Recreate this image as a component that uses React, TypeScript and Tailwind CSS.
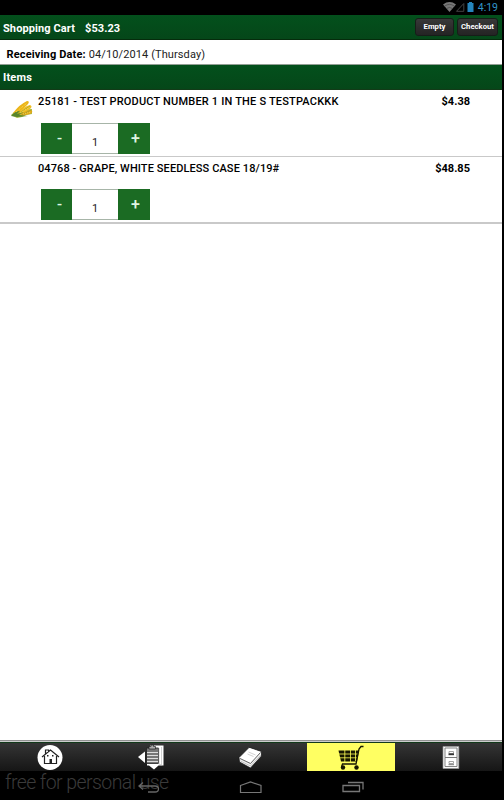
import React from 'react';

interface CartItem {
  code: string;
  name: string;
  price: string;
  quantity: number;
  corn?: boolean;
}

const items: CartItem[] = [
  { code: '25181', name: 'TEST PRODUCT NUMBER 1 IN THE S TESTPACKKK', price: '$4.38', quantity: 1, corn: true },
  { code: '04768', name: 'GRAPE, WHITE SEEDLESS CASE 18/19#', price: '$48.85', quantity: 1 },
];

const StatusBar: React.FC = () => (
  <div className="flex h-[15px] shrink-0 items-center justify-end pr-[6px]">
    <svg className="h-[15px] w-[32px]" viewBox="0 0 32 15">
      <path d="M0 4.5Q6.5-.3 13 4.5L6.5 12Z" fill="#777" />
      <path d="M1.5 6.2Q6.5 2.5 11.5 6.2M3.6 8.5Q6.5 6.4 9.4 8.5" fill="none" stroke="#444" strokeWidth=".7" />
      <path d="M13.5 11.3H20.8V3.5Z" fill="none" stroke="#444" strokeWidth="1" />
      <path d="M24.5 3H26V2h3v1h1.5v9h-6Z" fill="#2585bd" />
    </svg>
    <span className="ml-[3px] text-[10.5px] leading-[15px] text-[#3295c9]">4:19</span>
  </div>
);

const HeaderButton: React.FC<{ label: string; className: string }> = ({ label, className }) => (
  <button
    className={`h-[18px] rounded-[3px] border border-[#171d19] bg-linear-to-b from-[#383838] to-[#242424] text-[7.7px] leading-[16px] font-bold text-white ${className}`}
  >
    {label}
  </button>
);

const CornIcon: React.FC = () => (
  <svg className="h-[20px] w-[24px]" viewBox="0 0 24 20">
    <path d="M1 16Q3 13 8 11L22 10 22 15 16 16 12 18 7 19Z" fill="#a9bd45" />
    <path d="M3 14Q10 5 17 2Q20 2 18 5Q12 12 5 16Z" fill="#ebb419" />
    <path d="M7 15Q14 7 20 6Q23 7 20 10Q14 14 8 17Z" fill="#f0bf24" />
    <path d="M11 15Q17 11 21 11Q24 13 20 15L12 17Z" fill="#dfa719" />
    <path d="M8 15L20 7M12 16L21 11" stroke="#9a9a2c" strokeWidth=".7" />
    <path d="M1 17Q5 12 10 12L7 15 14 13 9 16 18 17 7 18Z" fill="#58852b" />
    <path d="M6 13L17 4M10 14L20 8M13 15L21 13" stroke="#ffe460" strokeWidth=".8" strokeDasharray="1 1" />
  </svg>
);

const QuantityStepper: React.FC<{ quantity: number }> = ({ quantity }) => (
  <div className="flex h-[31px] w-[109px]">
    <button className="w-[31px] bg-[#1b6b23] pb-[2px] pl-[6px] text-[15px] leading-[28px] font-medium text-[#dff5e1]">-</button>
    <span className="w-[46px] border-y border-[#a7b5a8] pt-[8px] text-center text-[11px] leading-[22px] text-[#222]">
      {quantity}
    </span>
    <button className="w-[32px] bg-[#1b6b23] pl-[3px] text-[16px] leading-[30px] font-medium text-[#dff5e1]">+</button>
  </div>
);

const CartRow: React.FC<{ item: CartItem }> = ({ item }) => (
  <li className="flex h-[67px] border-b border-[#c9c9c9] last:border-b-2">
    <div className="w-[38px] shrink-0 pt-[9px] pl-[10px]">{item.corn && <CornIcon />}</div>
    <div className="flex flex-1 flex-col">
      <div className="flex h-[33px] shrink-0 items-start justify-between pt-[5px] pr-[32px] text-[11px] leading-[13px] font-medium">
        <span className={item.corn ? 'tracking-[0.19px]' : 'tracking-[0.1px]'}>
          {item.code} - {item.name}
        </span>
        <span className="font-bold">{item.price}</span>
      </div>
      <div className={item.corn ? 'pl-[3px]' : '-mt-px pl-[3px]'}>
        <QuantityStepper quantity={item.quantity} />
      </div>
    </div>
  </li>
);

const HomeIcon: React.FC = () => (
  <svg className="h-[28px] w-[26px]" viewBox="0 0 26 28">
    <circle cx="13" cy="14.5" r="12.5" fill="#fff" />
    <path d="M5 14L13.5 7L22 14M7.5 13V20.5H19.5V13M8.5 11V7H11.5V9" fill="none" stroke="#222" strokeWidth="1.2" />
    <path d="M10 12h1.5v1.5H10Zm5 0h1.5v1.5H15Zm-2.5 4h2.5v5h-2.5Z" fill="#222" />
  </svg>
);

const OrderIcon: React.FC = () => (
  <svg className="h-[28px] w-[26px]" viewBox="0 0 26 28">
    <path d="M0 14L7 8.5V20Z" fill="#fff" />
    <path d="M12 2.5H25.5V22.5H20.5L16 26.5L11 22.5H9V20H21V5H12Z" fill="#fff" />
    <path d="M8.5 5H20.5V20.5H8.5Z" fill="#777" stroke="#222" strokeWidth=".8" />
    <path d="M9 9.5H20M9 12.5H20M9 15.5H20M9 18.5H20" stroke="#ddd" strokeWidth="1" />
    <path d="M11 3.5H13V2H15.5V3.5H17.5V6H11Z" fill="#aaa" stroke="#222" strokeWidth=".7" />
    <path d="M21 5V21L23.5 22V4" fill="none" stroke="#bbb" strokeWidth=".7" />
  </svg>
);

const BookIcon: React.FC = () => (
  <svg className="h-[28px] w-[26px]" viewBox="0 0 26 28">
    <path d="M1 14.5L11 4.5L23.5 8.5V13L12.5 25L1.5 19Z" fill="#eee" stroke="#111" strokeWidth=".7" />
    <path d="M2 15L11.5 5L22.5 9L12.5 20Z" fill="#fff" />
    <path d="M2 15.5L12.5 20.5L22.5 9.5" fill="none" stroke="#555" strokeWidth=".9" />
    <path d="M2.5 18L12.5 23L23 12" fill="none" stroke="#aaa" strokeWidth=".6" />
    <path d="M10.5 9L17.5 12M9.5 11L15.5 13.5" stroke="#ccc" strokeWidth=".9" />
  </svg>
);

const CartIcon: React.FC = () => (
  <svg className="h-[28px] w-[26px]" viewBox="0 0 26 28">
    <path d="M.5 7.5H21L19 18.5H3Z" fill="#171700" />
    <path d="M0 11H22M1 14.8H21M6.8 6V19M12.5 6V19M17.5 6V18" stroke="#ffff54" strokeWidth=".8" />
    <path d="M25.5 3.5H23L21 6L18 21H4.5L3.5 24" fill="none" stroke="#171700" strokeWidth="1.3" />
    <circle cx="5" cy="24.5" r="2.2" fill="#171700" />
    <circle cx="18.5" cy="24.5" r="2.2" fill="#171700" />
  </svg>
);

const CabinetIcon: React.FC = () => (
  <svg className="h-[28px] w-[26px]" viewBox="0 0 26 28">
    <path d="M5 3.5H20.8V25.5H5Z" fill="#f8f8f8" stroke="#999" strokeWidth=".7" />
    <path d="M7 5H19V14.5H7ZM7 14.5H19V23.5H7Z" fill="#fff" stroke="#777" strokeWidth=".9" />
    <path d="M11 8.5H15.5V10.5H11ZM11 18.5H15.5V20.5H11Z" fill="none" stroke="#999" strokeWidth=".9" />
    <path d="M10.5 11.3H16" stroke="#333" strokeWidth="1.8" />
    <path d="M10.5 21.7H16" stroke="#777" strokeWidth="1" />
  </svg>
);

const TabBar: React.FC = () => (
  <nav className="flex h-[28px] shrink-0 bg-linear-to-b from-[#353535] to-[#161616]">
    <div className="flex w-[100px] justify-center"><HomeIcon /></div>
    <div className="flex w-[101px] justify-center"><OrderIcon /></div>
    <div className="flex w-[100px] justify-center"><BookIcon /></div>
    <div className="flex w-[100px] justify-center">
      <div className="flex w-[88px] justify-center bg-[#ffff62]"><CartIcon /></div>
    </div>
    <div className="flex w-[100px] justify-center"><CabinetIcon /></div>
  </nav>
);

// Android system keys, with the trial watermark running underneath
const SystemBar: React.FC = () => (
  <div className="relative flex h-[29px] w-[501px] shrink-0 justify-center gap-[79px] overflow-hidden">
    <span className="absolute top-[1px] left-[5px] text-[19.5px] leading-[22px] font-light tracking-[-0.58px] whitespace-nowrap text-[#3a3a3a]">
      free for personal use
    </span>
    <svg className="relative h-[29px] w-[23px]" viewBox="0 0 23 29" fill="none" stroke="#666" strokeWidth="1.3">
      <path d="M6 11.5L2 15L6 18.5M2 15H18Q21.5 15 21.5 18T18 21H11" />
    </svg>
    <svg className="relative h-[29px] w-[23px]" viewBox="0 0 23 29" fill="none" stroke="#777" strokeWidth="1.2">
      <path d="M1.5 14.5L11.5 11L22 14.5V21.5H1.5Z" />
    </svg>
    <svg className="relative h-[29px] w-[23px]" viewBox="0 0 23 29" fill="none" stroke="#777" strokeWidth="1.3">
      <path d="M2 14.5H18.5V20.5H2ZM7 11.5H22V18.5" />
    </svg>
  </div>
);

export default function App() {
  return (
    <div className="flex h-[800px] w-[504px] flex-col overflow-hidden bg-black font-['Roboto','Liberation_Sans',sans-serif] text-black">
      <StatusBar />
      <div className="flex w-[502px] flex-1 flex-col">
        <header className="flex h-[25px] shrink-0 items-center border-b border-[#052c0c] bg-linear-to-b from-[#03501c] to-[#054719] pr-[4px] pl-[3px] text-white">
          <h1 className="pt-[2px] text-[11px] leading-[13px] font-bold tracking-[0.1px]">Shopping Cart</h1>
          <span className="ml-[10px] pt-[2px] text-[11px] leading-[13px] font-bold tracking-[0.08px]">$53.23</span>
          <div className="ml-auto flex gap-[3px]">
            <HeaderButton label="Empty" className="w-[39px]" />
            <HeaderButton label="Checkout" className="w-[41px]" />
          </div>
        </header>
        <main className="flex-1 bg-white">
          <div className="flex h-[25px] items-center border-b border-[#929e94] pt-[5px] pl-[6.5px] text-[11px] leading-[13px]">
            <span className="font-bold tracking-[0.15px]">Receiving Date:</span>
            <span className="ml-[3px] tracking-[0.1px] text-[#222]">04/10/2014 (Thursday)</span>
          </div>
          <h2 className="h-[25px] border-b border-[#123b18] bg-linear-to-b from-[#03501c] to-[#054719] pl-[3px] text-[11px] leading-[25px] font-bold tracking-[0.2px] text-white">
            Items
          </h2>
          <ul>
            {items.map((item) => (
              <CartRow key={item.code} item={item} />
            ))}
          </ul>
        </main>
        <div className="h-[3px] shrink-0 border-t border-b border-t-[#929292] border-b-[#12391a] bg-[#ccc]" />
        <TabBar />
      </div>
      <SystemBar />
    </div>
  );
}
